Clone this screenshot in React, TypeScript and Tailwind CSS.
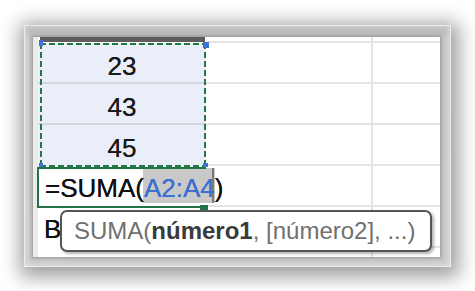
import React from "react";

const rowLine = "border-b-2 border-[#e4e4e4]";

function Row({
  a,
  aClass = "",
  height = "h-[41px]",
}: {
  a?: React.ReactNode;
  aClass?: string;
  height?: string;
}) {
  return (
    <div className={`flex ${height} shrink-0`}>
      <div className={`w-[168px] shrink-0 ${aClass}`}>{a}</div>
      <div className={`w-[167px] shrink-0 ${rowLine} border-r-2 border-r-[#e4e4e4]`} />
      <div className={`flex-1 ${rowLine}`} />
    </div>
  );
}

const hDash = "bg-[repeating-linear-gradient(90deg,#1f7a45_0_6px,transparent_6px_9px)]";
const vDash = "bg-[repeating-linear-gradient(180deg,#1f7a45_0_6px,transparent_6px_9px)]";

export default function App() {
  return (
    <div className="w-[475px] h-[291px] bg-white overflow-hidden pl-[24px] pt-[25px] font-['Liberation_Sans',Arial,sans-serif]">
      <div className="w-[427px] h-[242px] bg-[linear-gradient(180deg,#b3b3b3_0px,#c4c4c4_14px,#c8c8c8_100%)] pl-[9px] pt-[12px] pr-[11px] pb-[10px] shadow-[2px_4px_18px_6px_rgba(0,0,0,0.38),inset_0_0_0_1px_#ececec,inset_0_0_5px_3px_rgba(255,255,255,0.4)]">
        <div className="relative w-[407px] h-[220px] bg-white overflow-hidden shadow-[0_0_3px_1px_rgba(0,0,0,0.25)]">
          <div className="flex h-full">
            <div className="w-[5px] h-full bg-[#ebebeb] shrink-0" />
            <div className="flex-1 flex flex-col">
              {/* header */}
              <div className="flex h-[6px] shrink-0">
                <div className="w-[168px] shrink-0">
                  <div className="ml-[2px] w-[165px] h-[5px] bg-[#5c5c5c]" />
                </div>
                <div className={`w-[167px] shrink-0 ${rowLine} border-r-2 border-r-[#e4e4e4]`} />
                <div className={`flex-1 ${rowLine}`} />
              </div>
              <Row
                aClass="bg-[#e9eef8] border-b-2 border-[#d3d6dc] text-center text-[26px] leading-[47px] text-[#1a1a1a] [text-shadow:0_0_0.4px_#1a1a1a]"
                a="23"
              />
              <Row
                aClass="bg-[#e9eef8] border-b-2 border-[#d3d6dc] text-center text-[26px] leading-[47px] text-[#1a1a1a] [text-shadow:0_0_0.4px_#1a1a1a]"
                a="43"
              />
              <Row
                aClass="bg-[#e9eef8] text-center text-[26px] leading-[47px] text-[#1a1a1a] [text-shadow:0_0_0.4px_#1a1a1a]"
                a="45"
              />
              <Row
                aClass="relative"
                a={
                  <>
                    <div className="absolute left-[105px] top-[2px] w-[72px] h-[35px] bg-[#c9c9c9]" />
                    <div className="absolute left-[174px] top-[2px] w-[2px] h-[35px] bg-[#7a7a7a]" />
                    <div className="relative pl-[7px] whitespace-nowrap text-[26px] leading-[45px] text-[#111] [text-shadow:0_0_0.4px_#111]">
                      =SUMA(<span className="text-[#3d6fd3] [text-shadow:0_0_0.4px_#3d6fd3]">A2:A4</span>)
                    </div>
                  </>
                }
              />
              <Row aClass="pl-[6px] text-[26px] leading-[45px] text-[#111] [text-shadow:0_0_0.4px_#111]" a="B" />
              <Row />
            </div>
          </div>

          {/* dashed range border */}
          <div className={`absolute left-[7px] top-[6px] w-[166px] h-[2px] ${hDash}`} />
          <div className={`absolute left-[7px] top-[128px] w-[166px] h-[2px] ${hDash}`} />
          <div className={`absolute left-[7px] top-[6px] w-[2px] h-[124px] ${vDash}`} />
          <div className={`absolute left-[171px] top-[6px] w-[2px] h-[124px] ${vDash}`} />
          {/* range handles */}
          <div className="absolute left-[6px] top-[3px] w-[4px] h-[6px] bg-[#3f72d6]" />
          <div className="absolute left-[170px] top-[5px] w-[6px] h-[6px] bg-[#3f72d6]" />
          <div className="absolute left-[6px] top-[126px] w-[4px] h-[4px] bg-[#3f72d6]" />
          <div className="absolute left-[170px] top-[126px] w-[5px] h-[4px] bg-[#3f72d6]" />

          {/* active formula cell */}
          <div className="absolute left-[4px] top-[130px] w-[169px] h-[41px] border-2 border-[#217346] border-r-0" />
          <div className="absolute left-[167px] top-[168px] w-[8px] h-[6px] bg-[#217346]" />

          {/* tooltip */}
          <div className="absolute left-[27px] top-[173px] w-[372px] h-[42px] bg-white border-2 border-[#555555] rounded-[7px] shadow-[2px_2px_3px_rgba(0,0,0,0.3)] pl-[12px] text-[24px] leading-[38px] whitespace-nowrap text-[#707070]">
            SUMA(<span className="font-bold text-[#3a3a3a]">número1</span>, [número2], ...)
          </div>
        </div>
      </div>
    </div>
  );
}
